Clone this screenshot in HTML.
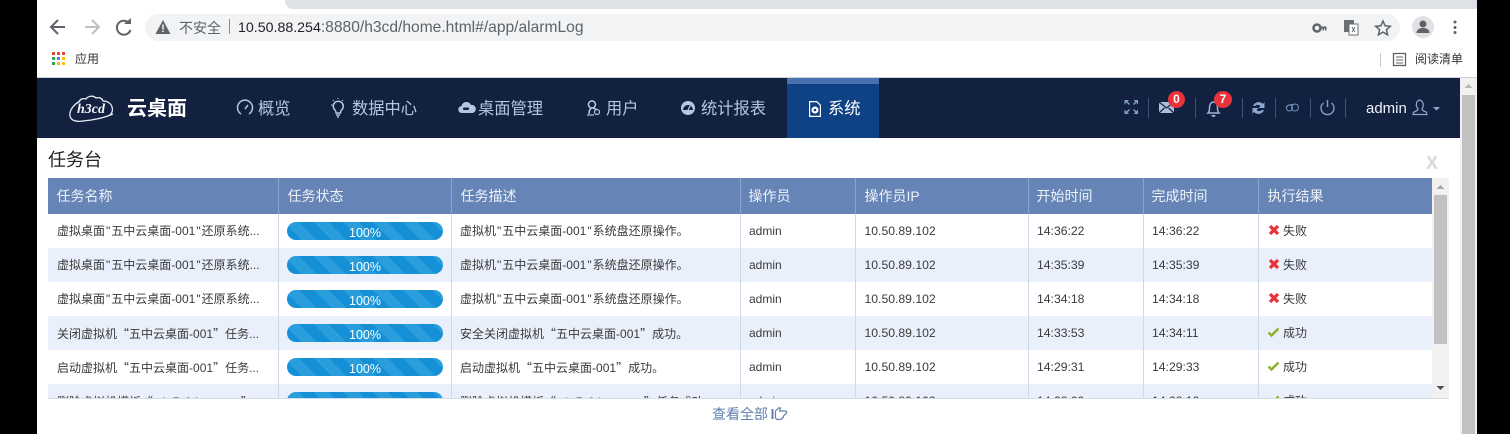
<!DOCTYPE html>
<html lang="zh">
<head>
<meta charset="utf-8">
<style>
html,body{margin:0;padding:0;width:1510px;height:434px;overflow:hidden;background:#000;font-family:"Liberation Sans","Noto Sans CJK SC",sans-serif;}
.a{position:absolute;white-space:nowrap}
svg{position:absolute;overflow:visible}
#page{position:absolute;left:37px;top:0;width:1440px;height:434px;background:#fff;overflow:hidden}
#root{position:absolute;left:0;top:0;width:1510px;height:434px}
.nav{position:absolute;top:78px;height:60px;line-height:62px;font-size:16.25px;color:#b5c7df;white-space:nowrap}
.sep{position:absolute;top:98px;width:1px;height:20px;background:#3c5478}
#tbl{position:absolute;left:48px;top:178px;width:1401px;height:220px;overflow:hidden;background:#fff}
.th{position:absolute;left:0;top:0;width:1384px;height:36px;background:#6685b6}
.th span{position:absolute;top:0;line-height:37px;font-size:14px;color:#eef2f8;white-space:nowrap}
.r{position:absolute;left:0;width:1384px;height:34px;font-size:12px;color:#3a3a3a}
.r.e{background:#eaf0fb}
.r>span{position:absolute;top:0;line-height:35px;white-space:nowrap}
.q{font-family:"Noto Sans CJK SC",sans-serif}
.p{padding:0 1px}
.w{letter-spacing:.6px}
.bar{position:absolute;left:239px;top:8px;width:156px;height:18px;border-radius:9px;background:repeating-linear-gradient(45deg,#1590d6 0,#1590d6 10.5px,#2a9edd 10.5px,#2a9edd 21px);color:#fff;text-align:center;font-size:12.5px;line-height:23px}
.vl{position:absolute;top:0;width:1px;height:220px;background:#cfd8e6}
.vh{position:absolute;top:0;width:1px;height:36px;background:#8ba4cd}
</style>
</head>
<body>
<div id="root">
<div id="page"></div>

<!-- browser chrome -->
<div class="a" style="left:285px;top:0;width:1192px;height:9px;background:#dee1e6;border-bottom-left-radius:8px"></div>
<div class="a" style="left:145px;top:14px;width:1255px;height:27px;background:#f1f3f4;border-radius:14px"></div>
<svg style="left:0;top:0" width="1510" height="78" viewBox="0 0 1510 78">
  <g transform="translate(0,-6)">
  <path d="M65 33H52M58 26l-7 7 7 7" fill="none" stroke="#5f6368" stroke-width="2"/>
  <path d="M85 33h13M92 26l7 7-7 7" fill="none" stroke="#bcc0c4" stroke-width="2"/>
  <path d="M129.500 29.500A7 7 0 1 0 130.500 36" fill="none" stroke="#5f6368" stroke-width="2"/>
  <path d="M124 29h7v-6z" fill="#5f6368" transform="translate(0,1)"/>
  </g>
  <g transform="translate(0,-5)">
  <path d="M163 25l7.500 14h-15z" fill="#5f6368"/>
  <rect x="162.300" y="29.500" width="1.400" height="5" fill="#fff"/><rect x="162.300" y="35.500" width="1.400" height="1.500" fill="#fff"/>
  </g>
  <rect x="229" y="19" width="1" height="15" fill="#8a8d91"/>
  <circle cx="1317" cy="28" r="3.500" fill="none" stroke="#5f6368" stroke-width="2.500"/>
  <path d="M1320 26.500h6.500v4h-1.500v-2h-1v2h-1.500v-2h-2.500z" fill="#5f6368"/>
  <rect x="1344" y="20" width="10" height="12" fill="#6b6f73"/>
  <rect x="1349" y="24" width="9" height="11" fill="#fff" stroke="#6b6f73"/>
  <path d="M1352 27l3 5M1355 27l-3 5" stroke="#6b6f73" stroke-width="1"/>
  <path d="M1383 21l2.100 4.800 5.200.5-3.900 3.400 1.200 5.100-4.600-2.700-4.600 2.700 1.200-5.100-3.900-3.400 5.200-.5z" fill="none" stroke="#5f6368" stroke-width="1.500"/>
  <circle cx="1423" cy="27" r="11" fill="#dfe1e5"/>
  <circle cx="1423" cy="24" r="3.500" fill="#5f6368"/>
  <path d="M1416.500 33c0-3.500 3-5 6.500-5s6.500 1.500 6.500 5z" fill="#5f6368"/>
  <circle cx="1455" cy="22" r="1.500" fill="#5f6368"/><circle cx="1455" cy="27.500" r="1.500" fill="#5f6368"/><circle cx="1455" cy="32.500" r="1.500" fill="#5f6368"/>
  <g>
    <rect x="52" y="52" width="3" height="3" fill="#e8453c"/><rect x="57" y="52" width="3" height="3" fill="#e8453c"/><rect x="62" y="52" width="3" height="3" fill="#e8453c"/>
    <rect x="52" y="57" width="3" height="3" fill="#34a853"/><rect x="57" y="57" width="3" height="3" fill="#4285f4"/><rect x="62" y="57" width="3" height="3" fill="#fbbc05"/>
    <rect x="52" y="62" width="3" height="3" fill="#34a853"/><rect x="57" y="62" width="3" height="3" fill="#fbbc05"/><rect x="62" y="62" width="3" height="3" fill="#fbbc05"/>
  </g>
  <rect x="1380" y="53" width="1" height="14" fill="#c4c7ca"/>
  <rect x="1393.500" y="53.500" width="12" height="12" fill="none" stroke="#5f6368" stroke-width="1.300"/>
  <path d="M1396 57h7M1396 60h7M1396 63h7" stroke="#5f6368" stroke-width="1"/>
</svg>
<div class="a" style="left:179px;top:14px;line-height:28px;font-size:14px;color:#5f6368">不安全</div>
<div class="a" style="left:238px;top:14px;line-height:28px;font-size:14.2px;color:#5f6368"><span style="color:#202124">10.50.88.254</span><span style="font-size:15.6px">:8880/h3cd/home.html#/app/alarmLog</span></div>
<div class="a" style="left:75px;top:41px;line-height:37px;font-size:12px;color:#333">应用</div>
<div class="a" style="left:1415px;top:41px;line-height:37px;font-size:12px;color:#333">阅读清单</div>
<div class="a" style="left:37px;top:77px;width:1440px;height:1px;background:#cfd2d6"></div>

<!-- page scrollbar -->
<div class="a" style="left:1460px;top:78px;width:17px;height:356px;background:#f1f1f1"></div>
<div class="a" style="left:1462px;top:95px;width:13px;height:339px;background:#c1c1c1"></div>
<svg style="left:1460px;top:78px" width="17" height="17"><path d="M8.500 6l4 4h-8z" fill="#b8b8b8"/></svg>

<!-- nav -->
<div class="a" style="left:37px;top:78px;width:1423px;height:60px;background:#12213f"></div>
<div class="a" style="left:787px;top:78px;width:92px;height:60px;background:#0f4185"></div>
<div class="a" style="left:787px;top:78px;width:92px;height:6px;background:#4a70b0"></div>

<svg style="left:0;top:0" width="1510" height="140" viewBox="0 0 1510 140">
  <!-- logo -->
  <g fill="none" stroke="#e8edf4" stroke-width="1.300">
    <path d="M79 102c1-3 4-4 7-3 2-3 7-4 10-1 3-1 6 0 7 3 4 0 8 2 9 6 1 3 0 6-2 8"/>
    <path d="M80 101c-7 4-11 10-10 15 1 5 7 6 13 5 11-1 21-3 30-7"/>
  </g>
  <!-- nav icons -->
  <g fill="none" stroke="#b5c7df" stroke-width="1.500">
    <path d="M241 114a7.500 7.500 0 1 1 8 0"/><path d="M245 109l3-4"/>
    <path d="M335 110a5 5 0 1 1 6.500 0c-1 1-1 2-1 3h-4.500c0-1 0-2-1-3zM336 115h4M337 117h2"/>
    <path d="M331 105h1.500M344 105h-1.500M338 99v-1M333 100l1 1M343 100l-1 1" stroke-width="1"/>
    <path d="M592 101a3.500 3.500 0 1 1-.100 0zM589 114c0-4 1-6 3.500-6s3 1 4 2"/><path d="M587 115h7" stroke-width="1.200"/>
    <circle cx="597" cy="112" r="2.500" stroke-width="1.200"/>
  </g>
  <path d="M462 113a3.500 3.500 0 0 1-.5-7 5 5 0 0 1 9.500-1 4 4 0 0 1 1.500 8z" fill="#b5c7df"/>
  <rect x="463" y="107.500" width="6" height="2.500" rx="1" fill="#12213f"/>
  <circle cx="688" cy="108" r="7" fill="#b5c7df"/>
  <path d="M683 110a5 5 0 0 1 10 0z" fill="#12213f"/><path d="M688 110l2-4" stroke="#b5c7df" stroke-width="1.300"/>
  <path d="M809 101h8l4 4v12h-12z" fill="#fff"/>
  <path d="M810.200 102.200h6.300l3.300 3.300v10.300h-9.600z" fill="#0f4185"/>
  <circle cx="815" cy="110" r="3.500" fill="#fff"/><circle cx="815" cy="110" r="1.300" fill="#0f4185"/>
  <!-- right icons -->
  <g fill="none" stroke="#7f9ec8" stroke-width="1.400">
    <path d="M1125.500 100.500l4 4M1137.500 100.500l-4 4M1125.500 113.500l4-4M1137.500 113.500l-4-4"/>
  </g>
  <path d="M1124.500 100h4.500l-4.500 4.500zM1138 100h-4.500l4.500 4.500zM1124.500 114h4.500l-4.500-4.500zM1138 114h-4.500l4.500-4.500z" fill="#7f9ec8"/>
  <rect x="1159" y="102" width="15" height="11" fill="#a9bfdc"/>
  <path d="M1159 102l7.500 6 7.500-6M1159 113l5.500-5M1174 113l-5.500-5" fill="none" stroke="#12213f" stroke-width="1.200"/>
  <path d="M1213 113c1.500-1.500 1.500-3 1.500-5 0-3.500 1.500-6 4-6s4 2.500 4 6c0 2 0 3.500 1.500 5z" fill="none" stroke="#9db6d8" stroke-width="1.500" transform="translate(-5,0)"/>
  <path d="M1211.500 115a2 2 0 0 0 4 0z" fill="#9db6d8"/>
  <path d="M1253 106a6 6 0 0 1 10-2l1.500-2v6h-6l2-2a4 4 0 0 0-5.500 0zM1264 110a6 6 0 0 1-10 2l-1.500 2v-6h6l-2 2a4 4 0 0 0 5.500 0z" fill="#8ba8d0"/>
  <g fill="none" stroke="#6d8ab4" stroke-width="1.100">
    <circle cx="1289.500" cy="108" r="3"/><circle cx="1295" cy="107.500" r="3.500"/>
    <path d="M1286 108c1-3 5-4 8-3"/>
  </g>
  <path d="M1323.500 103a6.500 6.500 0 1 0 8 0M1327.500 100v7" fill="none" stroke="#7f9ec8" stroke-width="1.400"/>
  <path d="M1419 100a4.500 5 0 0 1 3 8.500c0 2 2 2.500 4 3.500 1 .7 1 1.500 1 2.500h-14c0-1 0-1.800 1-2.500 2-1 4-1.500 4-3.500a4.500 5 0 0 1 1-8.500z" fill="none" stroke="#8ba8d0" stroke-width="1.200"/>
  <path d="M1433 107h7l-3.500 3.500z" fill="#8ba8d0"/>
</svg>

<div class="a" style="left:77px;top:102px;font:italic bold 14px 'Liberation Serif',serif;color:#f2f5f9;line-height:15px">h3cd</div>
<div class="a" style="left:127px;top:78px;line-height:63px;font-size:20px;font-weight:700;color:#fff">云桌面</div>
<div class="nav" style="left:258px">概览</div>
<div class="nav" style="left:352px">数据中心</div>
<div class="nav" style="left:478px">桌面管理</div>
<div class="nav" style="left:606px">用户</div>
<div class="nav" style="left:701px">统计报表</div>
<div class="nav" style="left:828px;color:#fff">系统</div>

<div class="sep" style="left:1148px"></div>
<div class="sep" style="left:1195px"></div>
<div class="sep" style="left:1242px"></div>
<div class="sep" style="left:1275px"></div>
<div class="sep" style="left:1310px"></div>
<div class="sep" style="left:1345px"></div>
<div class="a" style="left:1168px;top:91px;width:17px;height:17px;border-radius:50%;background:#e8333a;color:#fff;font-size:12px;font-weight:700;text-align:center;line-height:17px">0</div>
<div class="a" style="left:1214px;top:91px;width:18px;height:17px;border-radius:50%;background:#e8333a;color:#fff;font-size:12px;font-weight:700;text-align:center;line-height:17px">7</div>
<div class="a" style="left:1366px;top:78px;line-height:62px;font-size:15px;color:#eef2f8">admin</div>

<!-- title -->
<div class="a" style="left:48px;top:147px;line-height:26px;font-size:18px;color:#222">任务台</div>
<div class="a" style="left:1426px;top:152px;line-height:22px;font-size:18px;font-weight:700;color:#d5d8dc">X</div>

<!-- table -->
<div id="tbl">
  <div class="th">
    <span style="left:8.500px">任务名称</span>
    <span style="left:239.500px">任务状态</span>
    <span style="left:412.500px">任务描述</span>
    <span style="left:700.500px">操作员</span>
    <span style="left:816.500px">操作员IP</span>
    <span style="left:988.500px">开始时间</span>
    <span style="left:1103.500px">完成时间</span>
    <span style="left:1219.500px">执行结果</span>
  </div>

  <div class="r" style="top:36px">
    <span style="left:9px">虚拟桌面<span class="p">"</span>五中云桌面-001<span class="p">"</span>还原系统...</span><div class="bar">100%</div>
    <span style="left:412px">虚拟机<span class="p">"</span>五中云桌面-001<span class="p">"</span>系统盘还原操作。</span><span style="left:701px">admin</span><span style="left:816.500px;font-size:12.200px">10.50.89.102</span><span style="left:989px;font-size:12.200px">14:36:22</span><span style="left:1104px;font-size:12.200px">14:36:22</span><span style="left:1235px">失败</span>
    <svg style="left:1220px;top:10px" width="12" height="12" viewBox="0 0 12 12"><path d="M2 2l8 8M10 2l-8 8" stroke="#e8333a" stroke-width="3.300"/></svg>
  </div>
  <div class="r e" style="top:70px">
    <span style="left:9px">虚拟桌面<span class="p">"</span>五中云桌面-001<span class="p">"</span>还原系统...</span><div class="bar">100%</div>
    <span style="left:412px">虚拟机<span class="p">"</span>五中云桌面-001<span class="p">"</span>系统盘还原操作。</span><span style="left:701px">admin</span><span style="left:816.500px;font-size:12.200px">10.50.89.102</span><span style="left:989px;font-size:12.200px">14:35:39</span><span style="left:1104px;font-size:12.200px">14:35:39</span><span style="left:1235px">失败</span>
    <svg style="left:1220px;top:10px" width="12" height="12" viewBox="0 0 12 12"><path d="M2 2l8 8M10 2l-8 8" stroke="#e8333a" stroke-width="3.300"/></svg>
  </div>
  <div class="r" style="top:104px">
    <span style="left:9px">虚拟桌面<span class="p">"</span>五中云桌面-001<span class="p">"</span>还原系统...</span><div class="bar">100%</div>
    <span style="left:412px">虚拟机<span class="p">"</span>五中云桌面-001<span class="p">"</span>系统盘还原操作。</span><span style="left:701px">admin</span><span style="left:816.500px;font-size:12.200px">10.50.89.102</span><span style="left:989px;font-size:12.200px">14:34:18</span><span style="left:1104px;font-size:12.200px">14:34:18</span><span style="left:1235px">失败</span>
    <svg style="left:1220px;top:10px" width="12" height="12" viewBox="0 0 12 12"><path d="M2 2l8 8M10 2l-8 8" stroke="#e8333a" stroke-width="3.300"/></svg>
  </div>
  <div class="r e" style="top:138px">
    <span style="left:9px">关闭虚拟机<span class="q">“</span>五中云桌面-001<span class="q">”</span>任务...</span><div class="bar">100%</div>
    <span style="left:412px">安全关闭虚拟机<span class="q">“</span>五中云桌面-001<span class="q">”</span>成功。</span><span style="left:701px">admin</span><span style="left:816.500px;font-size:12.200px">10.50.89.102</span><span style="left:989px;font-size:12.200px">14:33:53</span><span style="left:1104px;font-size:12.200px">14:34:11</span><span style="left:1235px">成功</span>
    <svg style="left:1219px;top:10px" width="13" height="12" viewBox="0 0 13 12"><path d="M1.500 6.500l3 3 7-7" fill="none" stroke="#8db32a" stroke-width="2.500"/></svg>
  </div>
  <div class="r" style="top:172px">
    <span style="left:9px">启动虚拟机<span class="q">“</span>五中云桌面-001<span class="q">”</span>任务...</span><div class="bar">100%</div>
    <span style="left:412px">启动虚拟机<span class="q">“</span>五中云桌面-001<span class="q">”</span>成功。</span><span style="left:701px">admin</span><span style="left:816.500px;font-size:12.200px">10.50.89.102</span><span style="left:989px;font-size:12.200px">14:29:31</span><span style="left:1104px;font-size:12.200px">14:29:33</span><span style="left:1235px">成功</span>
    <svg style="left:1219px;top:10px" width="13" height="12" viewBox="0 0 13 12"><path d="M1.500 6.500l3 3 7-7" fill="none" stroke="#8db32a" stroke-width="2.500"/></svg>
  </div>
  <div class="r e" style="top:206px">
    <span style="left:9px">删除虚拟机模板<span class="q">“</span><span class="w">win7-64-server</span><span class="q">”</span>...</span><div class="bar">100%</div>
    <span style="left:412px">删除虚拟机模板<span class="q">“</span><span class="w">win7-64-server</span><span class="q">”</span>任务成功。</span><span style="left:701px">admin</span><span style="left:816.500px;font-size:12.200px">10.50.89.102</span><span style="left:989px;font-size:12.200px">14:28:09</span><span style="left:1104px;font-size:12.200px">14:28:19</span><span style="left:1235px">成功</span>
    <svg style="left:1219px;top:10px" width="13" height="12" viewBox="0 0 13 12"><path d="M1.500 6.500l3 3 7-7" fill="none" stroke="#8db32a" stroke-width="2.500"/></svg>
  </div>

  <div class="vl" style="left:230px"></div><div class="vl" style="left:403px"></div><div class="vl" style="left:692px"></div><div class="vl" style="left:807px"></div><div class="vl" style="left:980px"></div><div class="vl" style="left:1095px"></div><div class="vl" style="left:1210px"></div>
  <div class="vh" style="left:230px"></div><div class="vh" style="left:403px"></div><div class="vh" style="left:692px"></div><div class="vh" style="left:807px"></div><div class="vh" style="left:980px"></div><div class="vh" style="left:1095px"></div><div class="vh" style="left:1210px"></div>

  <!-- inner scrollbar -->
  <div style="position:absolute;left:1384px;top:0;width:17px;height:220px;background:#f1f1f1"></div>
  <div style="position:absolute;left:1386px;top:17px;width:13px;height:149px;background:#c1c1c1"></div>
  <svg style="left:1384px;top:0" width="17" height="220"><path d="M8.500 7l4 4h-8z" fill="#a8a8a8"/><path d="M4.500 208h8l-4 4z" fill="#505050"/></svg>
</div>
<div class="a" style="left:48px;top:398px;width:1401px;height:1px;background:#d8dce3"></div>

<!-- footer link -->
<div class="a" style="left:712px;top:403px;line-height:22px;font-size:14px;color:#5f81ad">查看全部</div>
<svg style="left:771px;top:406px" width="18" height="16" viewBox="0 0 18 16"><path d="M1.500 3v10" stroke="#5f81ad" stroke-width="2" fill="none"/><path d="M4.500 5l3-3h2l-1 3h6c1 0 1.500 1 1 2l-3 3c-.5 3-2.500 3.500-4 3.500H6l-1.500-1.500z" fill="none" stroke="#5f81ad" stroke-width="1.200"/></svg>
</div>
</body>
</html>
